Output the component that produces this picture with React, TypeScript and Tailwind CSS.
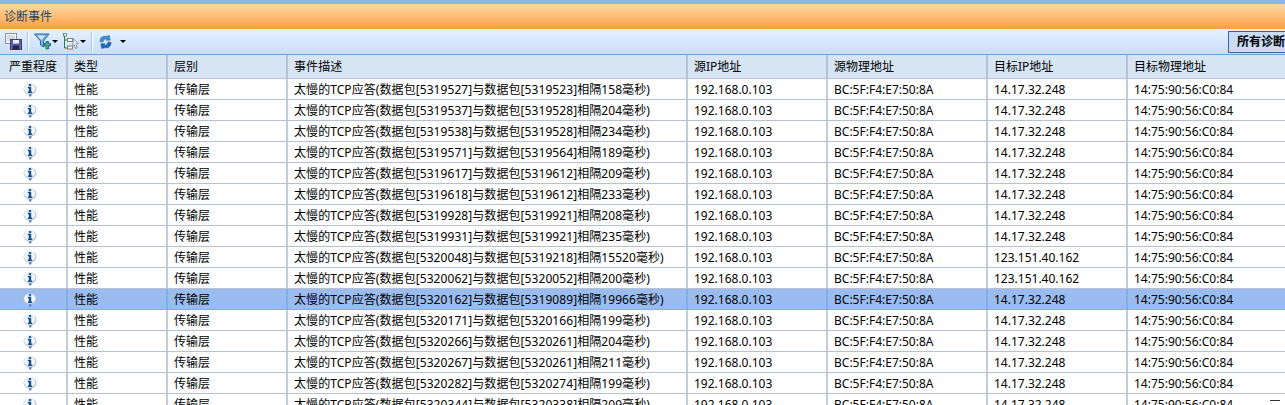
const rows = [
  ["5319527", "5319523", "158", "14.17.32.248"],
  ["5319537", "5319528", "204", "14.17.32.248"],
  ["5319538", "5319528", "234", "14.17.32.248"],
  ["5319571", "5319564", "189", "14.17.32.248"],
  ["5319617", "5319612", "209", "14.17.32.248"],
  ["5319618", "5319612", "233", "14.17.32.248"],
  ["5319928", "5319921", "208", "14.17.32.248"],
  ["5319931", "5319921", "235", "14.17.32.248"],
  ["5320048", "5319218", "15520", "123.151.40.162"],
  ["5320062", "5320052", "200", "123.151.40.162"],
  ["5320162", "5319089", "19966", "14.17.32.248"],
  ["5320171", "5320166", "199", "14.17.32.248"],
  ["5320266", "5320261", "204", "14.17.32.248"],
  ["5320267", "5320261", "211", "14.17.32.248"],
  ["5320282", "5320274", "199", "14.17.32.248"],
  ["5320344", "5320338", "209", "14.17.32.248"],
];

const headers = ["严重程度", "类型", "层别", "事件描述", "源IP地址", "源物理地址", "目标IP地址", "目标物理地址"];

const InfoIcon = () => (
  <svg className="mr-[7px]" width="14" height="14" viewBox="0 0 14 14">
    <path d="M5 9 L6.5 13.5 L8 13.5 L9.5 9 Z" fill="#4f739c" />
    <ellipse cx="7" cy="6" rx="6.5" ry="5.5" fill="#b4c8e0" />
    <ellipse cx="6.7" cy="5.6" rx="5.6" ry="4.8" fill="#f2f6fb" />
    <rect x="5.8" y="1" width="2.4" height="2" fill="#1c66ad" />
    <path d="M4.8 3.8 H8.2 V8.4 H9.2 V10 H5 V8.4 H5.8 V5.2 H4.8 Z" fill="#14528c" />
  </svg>
);

const Caret = () => <span className="ml-[1px] inline-block h-0 w-0 border-x-[3px] border-t-[3px] border-x-transparent border-t-black" />;

const SaveIcon = () => (
  <svg width="17" height="17" viewBox="0 0 17 17">
    <rect x="0.5" y="0.5" width="11" height="10" fill="#f4f7fb" stroke="#8a93a0" />
    <path d="M2 3 H10 M2 5 H10 M2 7 H6" stroke="#b4bcc8" />
    <rect x="5.5" y="6.5" width="11" height="10" fill="#5a5fa8" stroke="#3c3f7c" />
    <rect x="8" y="7" width="6" height="3.5" fill="#eef0f8" />
    <rect x="8" y="12.5" width="6" height="4" fill="#23254f" />
  </svg>
);

const FilterIcon = () => (
  <svg width="17" height="17" viewBox="0 0 17 17">
    <path d="M0.5 1 H15 L9.5 8 V14 L6.5 12 V8 Z" fill="#7fb0e4" stroke="#27679f" />
    <path d="M3 2.5 H11 L7.5 7 Z" fill="#cfe4f8" />
    <path d="M10 10.5 H12 V8.5 H14.5 V10.5 H16.5 V13 H14.5 V16 H12 V13 H10 Z" fill="#3ea59a" stroke="#145f5c" strokeWidth="0.8" />
  </svg>
);

const TreeIcon = () => (
  <svg width="16" height="17" viewBox="0 0 16 17">
    <path d="M1.5 1 V15 H5 M1.5 7 H5" stroke="#2f7a3a" fill="none" />
    <rect x="0.5" y="0.5" width="3" height="2.5" fill="#fff" stroke="#4f7f57" strokeWidth="0.8" />
    <rect x="4.5" y="5.5" width="5" height="3" fill="#f1f3f5" stroke="#777" strokeWidth="0.9" />
    <rect x="4.5" y="13" width="5" height="3" fill="#f1f3f5" stroke="#777" strokeWidth="0.9" />
    <path d="M10 5.5 L15.5 10.5 L13.2 11 L14.2 15 L12.4 15.5 L11.4 12 L10 13 Z" fill="#e9edf2" stroke="#7c8490" strokeWidth="0.8" />
  </svg>
);

const RefreshIcon = () => (
  <svg width="13" height="14" viewBox="0 0 14 15">
    <path d="M1 7 C1 3 4 1 7.5 1.5 L11 0.5 L12 5.5 L7.5 5.5 L9 4 C6.5 3.5 4.5 5 4.3 7.5 Z" fill="#3f8fdc" stroke="#23619e" strokeWidth="0.6" />
    <path d="M13 8 C13 12 10 14.5 6.5 13.5 L3 14.5 L2 9.5 L6.5 9.5 L5 11 C7.5 11.5 9.5 10 9.7 7.5 Z" fill="#1b6db8" stroke="#1a4f85" strokeWidth="0.6" />
  </svg>
);

const Separator = () => <span className="h-[20px] w-px bg-[#a9c5e8] shadow-[1px_0_0_#fff]" />;

const cols = [
  "w-[68px] justify-center border-r-2",
  "w-[100px] pl-[6px] border-r-2",
  "w-[120px] pl-[6px] border-r-2",
  "w-[400px] pl-[6px] tracking-[0.07px] border-r-2",
  "w-[140px] pl-[6px] border-r-2",
  "w-[160px] pl-[6px] border-r-2",
  "w-[140px] pl-[6px] border-r-2",
  "w-[158px] pl-[6px]",
];

export default function App() {
  return (
    <div className="relative flex h-[405px] w-[1285px] flex-col overflow-hidden bg-white text-[12px] text-black [font-family:'Noto_Sans','Noto_Sans_CJK_SC',sans-serif]">
      <div className="h-[4px] shrink-0 bg-[#8fb3e2]" />
      <div className="flex h-[25px] shrink-0 items-center bg-gradient-to-b from-[#ffd9a4] to-[#fe9f3c] pl-[4px] text-[#15465f]">诊断事件</div>
      <div className="flex h-[26px] shrink-0 items-center justify-between border-b border-[#6d9fdc] bg-gradient-to-b from-[#e6f1ff] to-[#c8defa] pl-[5px]">
        <div className="flex items-center">
          <SaveIcon />
          <span className="w-[5px]" />
          <Separator />
          <span className="w-[6px]" />
          <FilterIcon />
          <Caret />
          <span className="w-[5px]" />
          <TreeIcon />
          <Caret />
          <span className="w-[5px]" />
          <Separator />
          <span className="w-[7px]" />
          <RefreshIcon />
          <span className="w-[7px]" />
          <Caret />
        </div>
        <div className="-mr-[3px] flex h-[22px] w-[60px] shrink-0 items-center overflow-hidden whitespace-nowrap border border-[#3a659c] bg-[#c8dcf8] pl-[8px] font-bold">所有诊断</div>
      </div>
      <div className="flex h-[24px] shrink-0 border-b border-[#b6c2d3] bg-[#d7e4f1]">
        {headers.map((h, i) => (
          <div key={h} className={`flex shrink-0 items-center border-[#b6c2d3] pt-[1px] ${cols[i]}`}>{h}</div>
        ))}
      </div>
      {rows.map(([a, b, ms, target], r) => {
        const selected = r === 10;
        return (
          <div key={a} className={`flex h-[21px] shrink-0 border-b ${selected ? "border-[#7fade4] bg-[#9bbcef]" : "border-[#b6c2d3]"}`}>
            {[
              <InfoIcon />,
              "性能",
              "传输层",
              `太慢的TCP应答(数据包[${a}]与数据包[${b}]相隔${ms}毫秒)`,
              "192.168.0.103",
              "BC:5F:F4:E7:50:8A",
              target,
              "14:75:90:56:C0:84",
            ].map((cell, i) => (
              <div key={i} className={`flex shrink-0 items-center whitespace-nowrap pt-[1px] ${selected ? "border-[#7fade4]" : "border-[#c3cdda]"} ${cols[i]}`}>{cell}</div>
            ))}
          </div>
        );
      })}
      <span className="absolute left-[1270px] top-[400px] h-px w-[10px] bg-[#333]" />
    </div>
  );
}
